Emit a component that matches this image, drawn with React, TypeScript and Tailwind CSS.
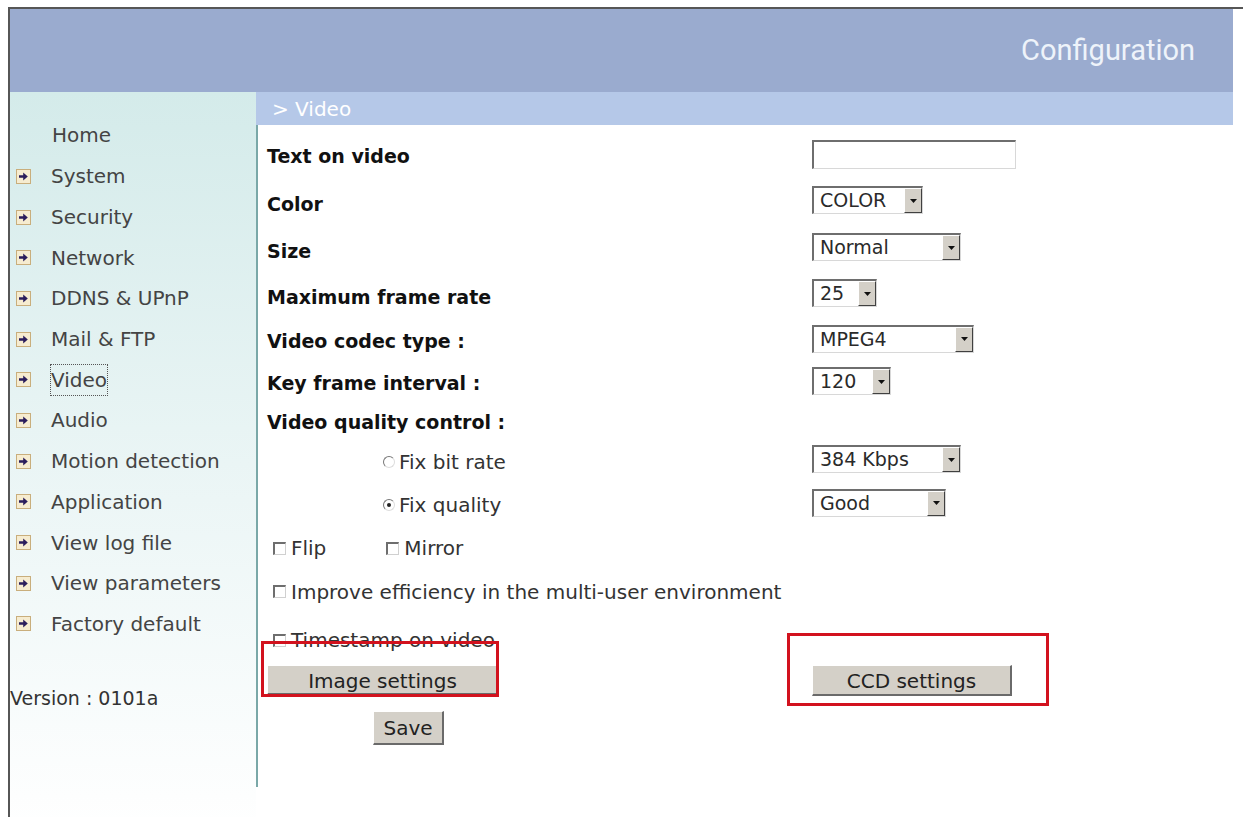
import React from "react";

const menu = [
  "System",
  "Security",
  "Network",
  "DDNS & UPnP",
  "Mail & FTP",
  "Video",
  "Audio",
  "Motion detection",
  "Application",
  "View log file",
  "View parameters",
  "Factory default",
];

function MenuIcon() {
  return (
    <svg width="15" height="15" viewBox="0 0 15 15" className="shrink-0">
      <rect x="0.5" y="0.5" width="14" height="14" fill="#f6ecd0" stroke="#c9ae7c" />
      <path d="M3 6.2h4.2V3.6L11.8 7.5 7.2 11.4V8.8H3z" fill="#2a1d5c" />
    </svg>
  );
}

function Arrow() {
  return (
    <div className="flex w-[18px] items-center justify-center border-t border-l border-t-white border-l-white border-r border-b border-r-[#404040] border-b-[#404040] bg-[#d4d0c8]">
      <svg width="7" height="4" viewBox="0 0 7 4">
        <path d="M0 0h7L3.5 4z" fill="#111" />
      </svg>
    </div>
  );
}

function Select({ value, className }: { value: string; className: string }) {
  return (
    <div
      className={
        "flex h-[28px] items-stretch border-t-2 border-l-2 border-t-[#6e6e6e] border-l-[#6e6e6e] border-r border-b border-r-[#d8d8d8] border-b-[#d8d8d8] bg-white " +
        className
      }
    >
      <span className="flex-1 pl-[6px] text-[19px] leading-[25px] text-[#2a2a2a]">{value}</span>
      <Arrow />
    </div>
  );
}

function Checkbox() {
  return (
    <span className="inline-block h-[13px] w-[13px] shrink-0 border-t-2 border-l-2 border-t-[#6e6e6e] border-l-[#6e6e6e] border-r border-b border-r-[#d0d0d0] border-b-[#d0d0d0] bg-white" />
  );
}

function Radio({ checked }: { checked?: boolean }) {
  return (
    <span className="flex h-[12px] w-[12px] shrink-0 items-center justify-center rounded-full border border-t-[#777] border-l-[#777] border-r-[#ddd] border-b-[#ddd] bg-white">
      {checked && <span className="h-[4px] w-[4px] rounded-full bg-[#222]" />}
    </span>
  );
}

function Label({ children }: { children: React.ReactNode }) {
  return <span className="text-[19px] font-bold text-[#111]">{children}</span>;
}

const btn =
  "border-t border-l border-t-white border-l-white border-r-2 border-b-2 border-r-[#6a6a6a] border-b-[#6a6a6a] bg-[#d4d0c8] text-[20px] text-[#222]";

export default function App() {
  return (
    <div className="min-h-[817px] bg-white pt-[7px] pl-[8px] font-['DejaVu_Sans',Verdana,sans-serif]">
      <div className="min-h-[810px] border-t-2 border-l-2 border-[#565656]">
        <div className="w-[1223px]">
          {/* top banner */}
          <div className="flex h-[83px] items-center justify-end bg-[#9aabcf] pr-[38px]">
            <span className="font-['Roboto','Liberation_Sans',sans-serif] text-[29px] text-[#eef3fa]">
              Configuration
            </span>
          </div>

          <div className="flex">
            {/* navigation */}
            <div className="w-[246px] bg-linear-to-b from-[#d4ebea] via-[#eaf5f5] to-white pt-[22px] pb-[120px]">
              <div className="flex h-[42px] items-center pl-[42px] text-[20px] text-[#444]">Home</div>
              {menu.map((item) => (
                <div key={item} className="flex h-[40.7px] items-center gap-[20px] pl-[6px] text-[20px] text-[#444]">
                  <MenuIcon />
                  <span className={item === "Video" ? "outline-1 outline-dotted outline-[#555]" : ""}>{item}</span>
                </div>
              ))}
              <div className="mt-[40px] text-[19px] text-[#333]">Version : 0101a</div>
            </div>

            {/* page body */}
            <div className="flex-1">
              <div className="flex h-[33px] items-center bg-[#b5c8e8] pl-[16px] text-[20px] text-white">
                &gt; Video
              </div>
              <div className="relative h-[662px] border-l-2 border-[#7aa8a8] pt-[7px] pl-[9px]">
                <div className="grid grid-cols-[545px_1fr]">
                  <div className="flex h-[48px] items-center"><Label>Text on video</Label></div>
                  <div className="flex h-[48px] items-center">
                    <div className="mb-[3px] h-[29px] w-[204px] border-t-2 border-l-2 border-t-[#6e6e6e] border-l-[#6e6e6e] border-r border-b border-r-[#d8d8d8] border-b-[#d8d8d8] bg-white" />
                  </div>

                  <div className="flex h-[48px] items-center"><Label>Color</Label></div>
                  <div className="flex h-[48px] items-center"><Select value="COLOR" className="mb-[8px] w-[111px]" /></div>

                  <div className="flex h-[46px] items-center"><Label>Size</Label></div>
                  <div className="flex h-[46px] items-center"><Select value="Normal" className="mb-[8px] w-[149px]" /></div>

                  <div className="flex h-[46px] items-center"><Label>Maximum frame rate</Label></div>
                  <div className="flex h-[46px] items-center"><Select value="25" className="mb-[8px] w-[65px]" /></div>

                  <div className="flex h-[43px] items-center"><Label>Video codec type :</Label></div>
                  <div className="flex h-[43px] items-center"><Select value="MPEG4" className="mb-[6px] w-[162px]" /></div>

                  <div className="flex h-[40px] items-center"><Label>Key frame interval :</Label></div>
                  <div className="flex h-[40px] items-center"><Select value="120" className="mb-[4px] w-[79px]" /></div>

                  <div className="col-span-2 flex h-[38px] items-center"><Label>Video quality control :</Label></div>

                  <div className="flex h-[42px] items-center gap-[4px] pl-[116px] text-[20px] text-[#333]">
                    <Radio />
                    <span>Fix bit rate</span>
                  </div>
                  <div className="flex h-[42px] items-center"><Select value="384 Kbps" className="mb-[6px] w-[149px]" /></div>

                  <div className="flex h-[43px] items-center gap-[4px] pl-[116px] text-[20px] text-[#333]">
                    <Radio checked />
                    <span>Fix quality</span>
                  </div>
                  <div className="flex h-[43px] items-center"><Select value="Good" className="mb-[4px] w-[134px]" /></div>

                  <div className="col-span-2 flex h-[44px] items-center pl-[6px] text-[20px] text-[#333]">
                    <Checkbox />
                    <span className="ml-[5px]">Flip</span>
                    <span className="ml-[60px]"><Checkbox /></span>
                    <span className="ml-[5px]">Mirror</span>
                  </div>

                  <div className="col-span-2 flex h-[43px] items-center gap-[5px] pl-[6px] text-[20px] text-[#333]">
                    <Checkbox />
                    <span>Improve efficiency in the multi-user environment</span>
                  </div>

                  <div className="col-span-2 mt-[6px] flex h-[42px] items-center gap-[5px] pl-[6px] text-[20px] text-[#333]">
                    <Checkbox />
                    <span>Timestamp on video</span>
                  </div>

                  <div className="mt-[2px] flex h-[34px] items-center">
                    <button className={"h-[30px] w-[232px] " + btn}>Image settings</button>
                  </div>
                  <div className="mt-[2px] flex h-[34px] items-center">
                    <button className={"h-[31px] w-[200px] " + btn}>CCD settings</button>
                  </div>

                  <div className="col-span-2 mt-[14px] flex h-[34px] items-center pl-[106px]">
                    <button className={"h-[34px] w-[71px] " + btn}>Save</button>
                  </div>
                </div>

                {/* highlight marks around the two settings buttons */}
                <div className="pointer-events-none absolute top-[516px] left-[3px] h-[56px] w-[238px] border-[3px] border-[#d2121e]" />
                <div className="pointer-events-none absolute top-[508px] left-[529px] h-[73px] w-[262px] border-[3px] border-[#d2121e]" />
              </div>
            </div>
          </div>
        </div>
      </div>
    </div>
  );
}
